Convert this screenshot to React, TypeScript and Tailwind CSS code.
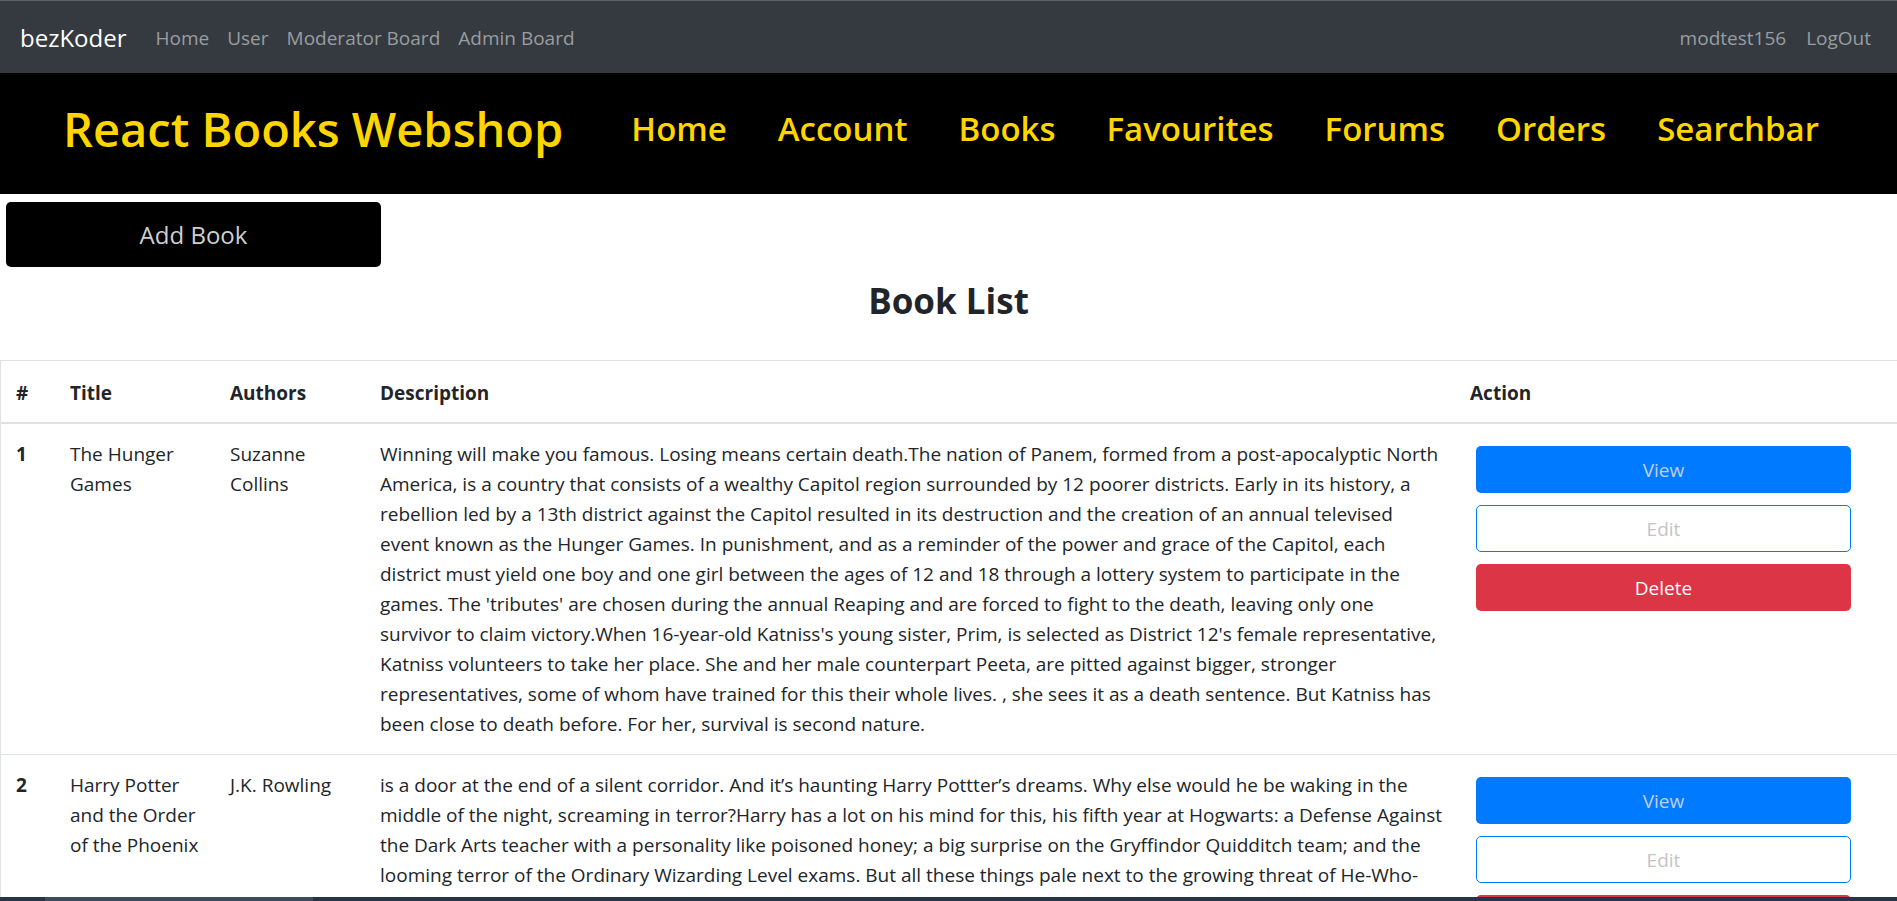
const FONT = "font-['Open_Sans','Liberation_Sans',sans-serif]";

interface Book {
  id: number;
  title: string[];
  authors: string[];
  description: string[];
}

const books: Book[] = [
  {
    id: 1,
    title: ["The Hunger", "Games"],
    authors: ["Suzanne", "Collins"],
    description: [
      "Winning will make you famous. Losing means certain death.The nation of Panem, formed from a post-apocalyptic North",
      "America, is a country that consists of a wealthy Capitol region surrounded by 12 poorer districts. Early in its history, a",
      "rebellion led by a 13th district against the Capitol resulted in its destruction and the creation of an annual televised",
      "event known as the Hunger Games. In punishment, and as a reminder of the power and grace of the Capitol, each",
      "district must yield one boy and one girl between the ages of 12 and 18 through a lottery system to participate in the",
      "games. The 'tributes' are chosen during the annual Reaping and are forced to fight to the death, leaving only one",
      "survivor to claim victory.When 16-year-old Katniss's young sister, Prim, is selected as District 12's female representative,",
      "Katniss volunteers to take her place. She and her male counterpart Peeta, are pitted against bigger, stronger",
      "representatives, some of whom have trained for this their whole lives. , she sees it as a death sentence. But Katniss has",
      "been close to death before. For her, survival is second nature.",
    ],
  },
  {
    id: 2,
    title: ["Harry Potter", "and the Order", "of the Phoenix"],
    authors: ["J.K. Rowling"],
    description: [
      "is a door at the end of a silent corridor. And it\u2019s haunting Harry Pottter\u2019s dreams. Why else would he be waking in the",
      "middle of the night, screaming in terror?Harry has a lot on his mind for this, his fifth year at Hogwarts: a Defense Against",
      "the Dark Arts teacher with a personality like poisoned honey; a big surprise on the Gryffindor Quidditch team; and the",
      "looming terror of the Ordinary Wizarding Level exams. But all these things pale next to the growing threat of He-Who-",
      "Must-Not-Be-Named \u2013 a threat that neither the magical government nor the authorities at Hogwarts can stop.",
    ],
  },
];

function Lines({ lines }: { lines: string[] }) {
  return (
    <>
      {lines.map((l, i) => (
        <span key={i} className="block whitespace-nowrap">
          {l}
        </span>
      ))}
    </>
  );
}

function TopNav() {
  return (
    <nav className="h-[73px] bg-[#343a40] border-t border-[#5c6166] flex items-center justify-between pl-[20px] pr-[16px] text-[19px]">
      <div className="flex items-center pt-[2px]">
        <span className="text-white text-[24px] mr-[20px]">bezKoder</span>
        {["Home", "User", "Moderator Board", "Admin Board"].map((l) => (
          <a key={l} className="px-[9px] text-[#9a9da0]">
            {l}
          </a>
        ))}
      </div>
      <div className="flex items-center pt-[2px]">
        <a className="px-[10px] text-[#9a9da0]">modtest156</a>
        <a className="px-[10px] text-[#9a9da0]">LogOut</a>
      </div>
    </nav>
  );
}

function Header() {
  return (
    <header className="h-[121px] bg-black flex items-center pl-[63px] pb-[8px]">
      <h1 className="text-[#ffd500] text-[47px] font-semibold leading-none mr-[68px]">
        React Books Webshop
      </h1>
      <ul className="flex items-center gap-[51px] pb-[2px]">
        {["Home", "Account", "Books", "Favourites", "Forums", "Orders", "Searchbar"].map((l) => (
          <li key={l} className="text-[#ffd500] text-[33px] font-semibold leading-none">
            {l}
          </li>
        ))}
      </ul>
    </header>
  );
}

function BookRow({ book }: { book: Book }) {
  return (
    <tr className="border-t border-[#dee2e6] align-top">
      <td className="p-[15px] font-bold">{book.id}</td>
      <td className="p-[15px]">
        <Lines lines={book.title} />
      </td>
      <td className="p-[15px]">
        <Lines lines={book.authors} />
      </td>
      <td className="p-[15px]">
        <Lines lines={book.description} />
      </td>
      <td className="px-[15px] pt-[22px] pb-[15px]">
        <div className="flex flex-col gap-[12px] w-[375px] ml-[6px]">
          <button className="h-[47px] rounded-[5px] bg-[#007bff] text-[#c3cde6]">View</button>
          <button className="h-[47px] rounded-[5px] bg-white border border-[#007bff] text-[#c4c4c4]">
            Edit
          </button>
          <button className="h-[47px] rounded-[5px] bg-[#dc3545] text-white">Delete</button>
        </div>
      </td>
    </tr>
  );
}

export default function App() {
  return (
    <div className={`${FONT} relative h-[901px] overflow-hidden bg-white text-[#212529] text-[19px] leading-[30px]`}>
      <TopNav />
      <Header />
      <div className="pt-[8px] pl-[6px]">
        <button className="w-[375px] h-[65px] rounded-[5px] bg-black text-[#cfcfcf] text-[24px]">
          Add Book
        </button>
      </div>
      <h3 className="text-center text-[35px] font-bold leading-[42px] mt-[13px] mb-[38px]">Book List</h3>
      <div className="border-l border-t border-[#dee2e6]">
        <table className="w-full table-fixed border-collapse">
          <colgroup>
            <col className="w-[54px]" />
            <col className="w-[160px]" />
            <col className="w-[150px]" />
            <col className="w-[1090px]" />
            <col />
          </colgroup>
          <thead>
            <tr className="border-b-2 border-[#dee2e6] text-left">
              <th className="px-[15px] pt-[17px] pb-[14px] font-bold">#</th>
              <th className="px-[15px] pt-[17px] pb-[14px] font-bold">Title</th>
              <th className="px-[15px] pt-[17px] pb-[14px] font-bold">Authors</th>
              <th className="px-[15px] pt-[17px] pb-[14px] font-bold">Description</th>
              <th className="px-[15px] pt-[17px] pb-[14px] font-bold">Action</th>
            </tr>
          </thead>
          <tbody>
            {books.map((b) => (
              <BookRow key={b.id} book={b} />
            ))}
          </tbody>
        </table>
      </div>
      <div className="absolute bottom-0 left-0 right-0 h-[4px] bg-[#253545] flex">
        <div className="w-[45px]" />
        <div className="w-[268px] bg-[#3a4c5e]" />
      </div>
    </div>
  );
}
